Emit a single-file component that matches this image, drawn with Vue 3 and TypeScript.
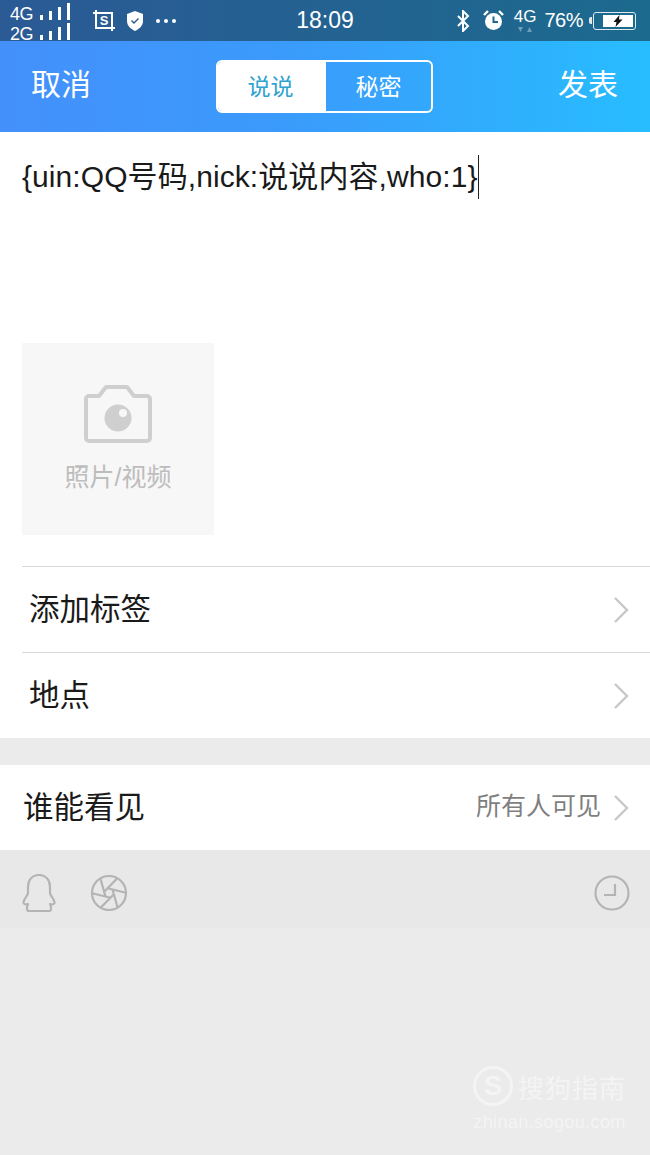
<script setup lang="ts">
const rows = [
  { id: 'tag', label: '添加标签' },
  { id: 'place', label: '地点' },
]
const barHeights = [5, 9, 13, 17]

// aperture blades: each one runs from a corner of the small hexagon out to the rim
const blades = Array.from({ length: 6 }, (_, k) => {
  const a = (Math.PI / 3) * k + 0.25
  const b = a + Math.PI / 3
  const ax = 5 * Math.cos(a)
  const ay = 5 * Math.sin(a)
  const dx = 5 * Math.cos(b) - ax
  const dy = 5 * Math.sin(b) - ay
  const t = 3.75
  return `M${(19 + ax).toFixed(1)} ${(19 + ay).toFixed(1)}L${(19 + ax + dx * t).toFixed(1)} ${(19 + ay + dy * t).toFixed(1)}`
}).join('')
</script>

<template>
  <div class="screen">
    <div class="status">
      <div class="status-left">
        <div class="signals">
          <div v-for="net in ['4G', '2G']" :key="net" class="signal">
            <span>{{ net }}</span>
            <i class="bars">
              <b v-for="h in barHeights" :key="h" :style="{ height: h + 'px' }"></b>
            </i>
          </div>
        </div>
        <svg class="ic-shot" width="24" height="24" viewBox="0 0 24 24">
          <path d="M4 1v18h19M1 4h19v18" fill="none" stroke="#fff" stroke-width="2" />
          <text x="12" y="16" text-anchor="middle" class="ic-s">S</text>
        </svg>
        <svg class="ic-shield" width="20" height="22" viewBox="0 0 20 22">
          <path d="M10 1l8 3v7c0 5-4 8-8 10-4-2-8-5-8-10V4z" fill="#fff" />
          <path d="M6.5 10.5l2.5 2.5 4.5-4.5" fill="none" stroke="#26598e" stroke-width="1.4" />
        </svg>
        <div class="dots"><i></i><i></i><i></i></div>
      </div>
      <div class="clock">18:09</div>
      <div class="status-right">
        <svg width="14" height="22" viewBox="0 0 14 22">
          <path d="M2 6l10 10-5 5V1l5 5L2 16" fill="none" stroke="#fff" stroke-width="2" />
        </svg>
        <svg class="ic-alarm" width="21" height="21" viewBox="0 0 21 21">
          <circle cx="10.5" cy="11.5" r="8.5" fill="#fff" />
          <path d="M10.5 6.5v5.5h4.5" fill="none" stroke="#1f6790" stroke-width="2" />
          <path d="M1 5l4-4M20 5l-4-4" stroke="#fff" stroke-width="2.4" />
        </svg>
        <div class="net">
          4G
          <svg class="arrows" width="14" height="6" viewBox="0 0 14 6">
            <path d="M0 0h5L2.500 5zM9 5h5L11.500 0z" fill="#6f9db8" />
          </svg>
        </div>
        <span class="pct">76%</span>
        <div class="battery">
          <div class="battery-fill">
            <svg width="10" height="12" viewBox="0 0 10 12"><path d="M6.500 0L0.500 7h3L2.500 12l7-7.500H6z" fill="#111" /></svg>
          </div>
        </div>
      </div>
    </div>

    <header class="nav">
      <span class="nav-btn">取消</span>
      <div class="tabs">
        <span class="tab active">说说</span>
        <span class="tab">秘密</span>
      </div>
      <span class="nav-btn">发表</span>
    </header>

    <main class="body">
      <div class="compose">
        <div class="compose-text">{uin:QQ号码,nick:说说内容,who:1}<i class="caret"></i></div>
        <div class="add-media">
          <svg width="70" height="60" viewBox="0 0 70 60">
            <path d="M3 15a3 3 0 0 1 3-3h10l7-9h21l7 9h13a3 3 0 0 1 3 3v39a3 3 0 0 1-3 3H6a3 3 0 0 1-3-3z" fill="none" stroke="#cfcfcf" stroke-width="4" stroke-linejoin="round" />
            <circle cx="35" cy="34" r="13.500" fill="#cfcfcf" />
            <circle cx="40" cy="29" r="4" fill="#f7f7f7" />
          </svg>
          <span>照片/视频</span>
        </div>
      </div>

      <div class="list">
        <div v-for="row in rows" :key="row.id" class="row">
          <span class="label">{{ row.label }}</span>
          <svg class="chev" width="17" height="28" viewBox="0 0 17 28"><path d="M2 2l12 12L2 26" fill="none" stroke="#c8c8c8" stroke-width="2.400" /></svg>
        </div>
      </div>

      <div class="who">
        <span class="label">谁能看见</span>
        <div class="who-right">
          <em>所有人可见</em>
          <svg class="chev" width="17" height="28" viewBox="0 0 17 28"><path d="M2 2l12 12L2 26" fill="none" stroke="#c8c8c8" stroke-width="2.400" /></svg>
        </div>
      </div>

      <div class="tools">
        <div class="tools-left">
          <svg width="34" height="38" viewBox="0 0 34 38" fill="none" stroke="#b4b4b4" stroke-width="2.200" stroke-linejoin="round">
            <path d="M17 1C10 1 6 6 6 13v6c0 3-5 6-4.500 10 .5 1 2.500 2 4.500 1l-1 3c0 3 0 4 2 4h20c2 0 2-1 2-4l-1-3c2 1 4 0 4.500-1 .5-4-4.500-7-4.500-10v-6C28 6 24 1 17 1z" />
          </svg>
          <svg width="38" height="38" viewBox="0 0 38 38" fill="none" stroke="#b4b4b4" stroke-width="2.200">
            <circle cx="19" cy="19" r="17" />
            <path :d="blades" />
          </svg>
        </div>
        <svg width="36" height="36" viewBox="0 0 36 36" fill="none" stroke="#b4b4b4" stroke-width="2.200">
          <circle cx="18" cy="18" r="16.500" />
          <path d="M21 9v11H10" />
        </svg>
      </div>

      <div class="panel"></div>
    </main>

    <div class="watermark">
      <div class="wm-top">
        <span class="wm-logo">S</span>
        <span class="wm-name">搜狗指南</span>
      </div>
      <div class="wm-url">zhinan.sogou.com</div>
    </div>
  </div>
</template>

<style scoped>
.screen {
  position: relative;
  width: 650px;
  height: 1155px;
  display: flex;
  flex-direction: column;
  overflow: hidden;
  background: #ebebeb;
  font-family: "Liberation Sans", "Noto Sans CJK SC", sans-serif;
}
.status {
  height: 41px;
  flex: none;
  display: grid;
  grid-template-columns: 1fr auto 1fr;
  align-items: center;
  padding: 0 14px 0 10px;
  color: #fff;
  background: linear-gradient(90deg, #2b5a95, #1c6a8e);
}
.status-left {
  display: flex;
  align-items: center;
}
.signals {
  display: flex;
  flex-direction: column;
  width: 63px;
  margin-top: 1px;
  gap: 3px;
}
.signal {
  display: flex;
  align-items: flex-end;
  height: 17px;
  font-size: 18px;
  letter-spacing: -0.5px;
}
.signal span {
  width: 29px;
  line-height: 12px;
}
.bars {
  display: flex;
  align-items: flex-end;
  gap: 6px;
  margin-left: 1px;
}
.bars b {
  width: 3px;
  background: #fff;
}
.ic-shot {
  margin-left: 19px;
}
.ic-s {
  font-size: 13px;
  font-weight: 700;
  fill: #fff;
  font-family: "Liberation Sans", sans-serif;
}
.ic-shield {
  margin-left: 9px;
}
.dots {
  display: flex;
  gap: 4px;
  margin-left: 11px;
}
.dots i {
  width: 4px;
  height: 4px;
  border-radius: 50%;
  background: #fff;
}
.clock {
  font-size: 23px;
  margin-left: 4px;
}
.status-right {
  display: flex;
  align-items: center;
  justify-content: flex-end;
}
.ic-alarm {
  margin-left: 13px;
}
.net {
  position: relative;
  margin-left: 10px;
  font-size: 17px;
  margin-top: -7px;
}
.arrows {
  position: absolute;
  left: 4px;
  top: 20px;
}
.pct {
  margin-left: 8px;
  font-size: 20px;
  letter-spacing: -0.5px;
}
.battery {
  position: relative;
  margin-left: 10px;
  width: 43px;
  height: 18px;
  padding: 2px;
  box-sizing: border-box;
  border: 1.500px solid #dfe9ee;
  border-radius: 3px;
  display: flex;
  justify-content: flex-end;
}
.battery::before {
  content: "";
  position: absolute;
  left: -5px;
  top: 4px;
  width: 3px;
  height: 7px;
  background: #dfe9ee;
  border-radius: 2px 0 0 2px;
}
.battery-fill {
  width: 30px;
  background: #fff;
  display: flex;
  align-items: center;
  justify-content: center;
}
.nav {
  height: 91px;
  flex: none;
  display: flex;
  align-items: center;
  justify-content: space-between;
  padding: 0 32px 4px 31px;
  box-sizing: border-box;
  color: #fff;
  background: linear-gradient(90deg, #4490fb 0%, #3a9bfb 45%, #27bdff 100%);
}
.nav-btn {
  font-size: 30px;
  line-height: 40px;
}
.tabs {
  display: flex;
  width: 217px;
  height: 53px;
  margin-top: 4px;
  box-sizing: border-box;
  border: 2px solid #fff;
  border-radius: 6px;
  overflow: hidden;
}
.tab {
  flex: 1;
  display: flex;
  align-items: center;
  justify-content: center;
  padding-bottom: 3px;
  box-sizing: border-box;
  font-size: 23px;
  color: #fff;
}
.tab.active {
  flex: none;
  width: 108px;
  padding-right: 3px;
  background: #fff;
  color: #2fa3cf;
}
.body {
  flex: 1;
  display: flex;
  flex-direction: column;
}
.compose {
  height: 434px;
  flex: none;
  padding: 0 22px;
  box-sizing: border-box;
  background: #fff;
}
.compose-text {
  display: flex;
  align-items: center;
  height: 44px;
  margin-top: 23px;
  font-size: 30px;
  line-height: 44px;
  letter-spacing: 0.08px;
  color: #1a1a1a;
  white-space: nowrap;
}
.caret {
  width: 1.500px;
  height: 44px;
  background: #222;
}
.add-media {
  margin-top: 144px;
  width: 192px;
  height: 192px;
  background: #f7f7f7;
  display: flex;
  flex-direction: column;
  align-items: center;
  padding-top: 41px;
  box-sizing: border-box;
  gap: 13px;
  color: #bdbdbd;
  font-size: 25px;
}
.list {
  flex: none;
  background: #fff;
  padding-left: 22px;
}
.row {
  height: 86px;
  box-sizing: border-box;
  border-top: 1px solid #d9d9d9;
  display: flex;
  align-items: center;
  justify-content: space-between;
  padding: 0 20px 0 7px;
  font-size: 30.500px;
  color: #1a1a1a;
}
.label {
  padding-bottom: 6px;
}
.chev {
  display: block;
}
.who {
  flex: none;
  height: 85px;
  margin-top: 27px;
  background: #fff;
  display: flex;
  align-items: center;
  justify-content: space-between;
  padding: 0 20px 0 23px;
  font-size: 30.500px;
  color: #1a1a1a;
}
.who-right {
  display: flex;
  align-items: center;
  gap: 12px;
}
.who-right em {
  font-style: normal;
  font-size: 25px;
  padding-bottom: 8px;
  color: #7f7f7f;
}
.tools {
  flex: none;
  height: 78px;
  background: #e8e8e8;
  display: flex;
  align-items: center;
  justify-content: space-between;
  padding: 8px 20px 0 22px;
  box-sizing: border-box;
}
.tools-left {
  display: flex;
  align-items: center;
  gap: 34px;
}
.panel {
  flex: 1;
  background: #ebebeb;
}
.watermark {
  position: absolute;
  right: 24px;
  top: 1066px;
  color: #f4f4f4;
  text-align: center;
}
.wm-top {
  display: flex;
  align-items: center;
  gap: 5px;
}
.wm-logo {
  width: 34px;
  height: 34px;
  border: 3px solid #f4f4f4;
  border-radius: 50%;
  display: flex;
  align-items: center;
  justify-content: center;
  font-size: 28px;
  font-weight: 700;
}
.wm-name {
  font-size: 26px;
  letter-spacing: 1px;
}
.wm-url {
  margin-top: 6px;
  font-size: 18px;
  letter-spacing: 0.4px;
}
</style>
